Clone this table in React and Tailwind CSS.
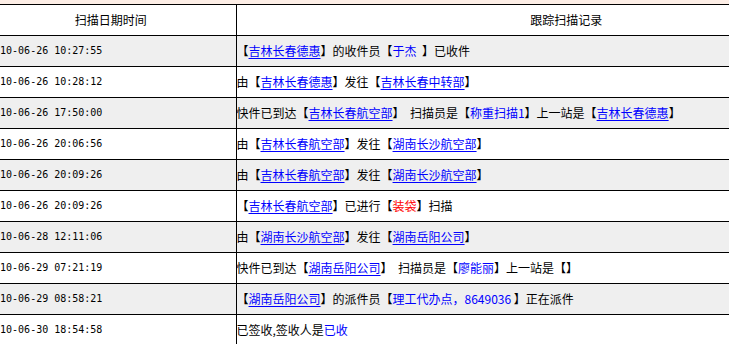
import React from "react";

const L = ({ children }) => <a href="#" className="text-[#0000ff] underline underline-offset-2">{children}</a>;
const B = ({ children }) => <span className="text-[#0000ff]">{children}</span>;
const R = ({ children }) => <span className="text-[#ff0000]">{children}</span>;

const rows = [
  ["2010-06-26 10:27:55", <>【<L>吉林长春德惠</L>】的收件员【<B>于杰&nbsp;&nbsp;</B>】已收件</>],
  ["2010-06-26 10:28:12", <>由【<L>吉林长春德惠</L>】发往【<L>吉林长春中转部</L>】</>],
  ["2010-06-26 17:50:00", <>快件已到达【<L>吉林长春航空部</L>】&nbsp;&nbsp;扫描员是【<B>称重扫描1</B>】上一站是【<L>吉林长春德惠</L>】</>],
  ["2010-06-26 20:06:56", <>由【<L>吉林长春航空部</L>】发往【<L>湖南长沙航空部</L>】</>],
  ["2010-06-26 20:09:26", <>由【<L>吉林长春航空部</L>】发往【<L>湖南长沙航空部</L>】</>],
  ["2010-06-26 20:09:26", <>【<L>吉林长春航空部</L>】已进行【<R>装袋</R>】扫描</>],
  ["2010-06-28 12:11:06", <>由【<L>湖南长沙航空部</L>】发往【<L>湖南岳阳公司</L>】</>],
  ["2010-06-29 07:21:19", <>快件已到达【<L>湖南岳阳公司</L>】&nbsp;&nbsp;扫描员是【<B>廖能丽</B>】上一站是【】</>],
  ["2010-06-29 08:58:21", <>【<L>湖南岳阳公司</L>】的派件员【<B>理工代办点，8649036&nbsp;</B>】正在派件</>],
  ["2010-06-30 18:54:58", <>已签收,签收人是<B>已收</B></>],
];

export default function App() {
  return (
    <div className="w-[729px] h-[344px] overflow-hidden bg-white text-black">
      <div className="h-[4px] bg-[#fdeee6]" />
      <table
        className="ml-[-14px] w-[910px] border-collapse text-[12px] leading-none"
        style={{ fontFamily: '"Noto Sans CJK SC", sans-serif' }}
      >
        <thead>
          <tr className="h-[31px] bg-white">
            <th className="w-[250px] border-t border-black p-0 text-center font-normal">扫描日期时间</th>
            <th className="border-t border-l border-black p-0 text-center font-normal">跟踪扫描记录</th>
          </tr>
        </thead>
        <tbody>
          {rows.map(([date, rec], i) => (
            <tr key={i} className={`h-[31px] ${i % 2 === 0 ? "bg-[#efefef]" : "bg-white"}`}>
              <td
                className="border-t border-black pl-[2px] text-[10px] whitespace-nowrap"
                style={{ fontFamily: '"DejaVu Sans Mono", monospace' }}
              >
                {date}
              </td>
              <td className="border-t border-l border-black p-0 whitespace-nowrap">{rec}</td>
            </tr>
          ))}
        </tbody>
      </table>
    </div>
  );
}
